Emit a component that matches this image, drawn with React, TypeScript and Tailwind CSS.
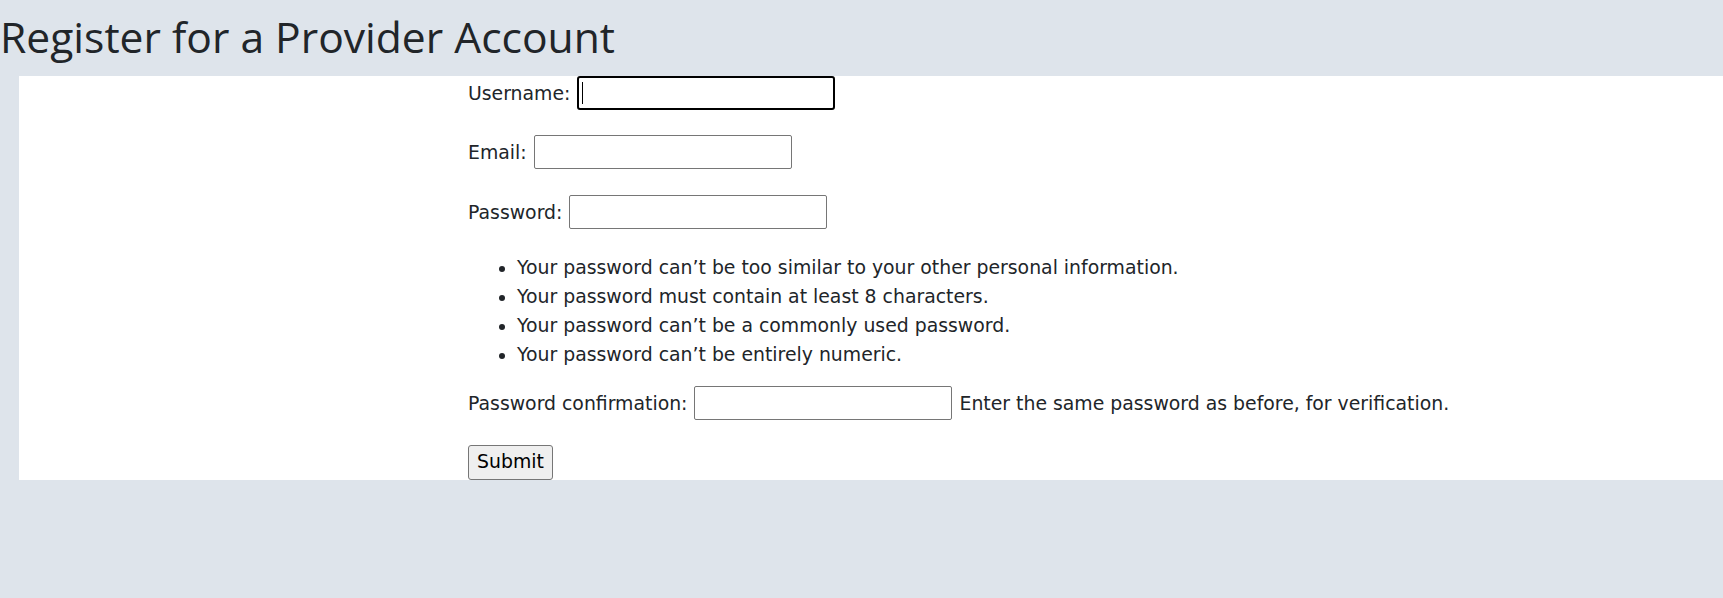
const bodyFont = "font-['DejaVu_Sans',sans-serif]";

const rules = [
  'Your password can’t be too similar to your other personal information.',
  'Your password must contain at least 8 characters.',
  'Your password can’t be a commonly used password.',
  'Your password can’t be entirely numeric.',
];

function TextInput({ focused = false }: { focused?: boolean }) {
  if (focused) {
    return (
      <div className="relative h-[34px] w-[258px] rounded-[3px] border-2 border-black bg-white">
        {/* blinking caret */}
        <span className="absolute left-[3px] top-[4px] h-[22px] w-px bg-black" />
      </div>
    );
  }
  return (
    <input
      type="text"
      readOnly
      className="h-[34px] w-[258px] rounded-[2px] border border-[#767676] bg-white outline-none"
    />
  );
}

function Row({ label, focused, className = '' }: { label: string; focused?: boolean; className?: string }) {
  return (
    <div className={`flex h-[34px] items-center gap-[7px] ${className}`}>
      <label className="pt-[2px]">{label}</label>
      <TextInput focused={focused} />
    </div>
  );
}

export default function App() {
  return (
    <div className="min-h-[598px] bg-[#dee4eb] text-[#212529]">
      <div className="h-[76px] pt-[11px]">
        <h1 className="font-['Open_Sans',sans-serif] text-[42.6px] leading-[50px] font-normal">
          Register for a Provider Account
        </h1>
      </div>

      <div className={`ml-[19px] h-[404px] bg-white pl-[449px] text-[18.85px] ${bodyFont}`}>
        <form>
          <Row label="Username:" focused />
          <Row label="Email:" className="mt-[25px]" />
          <Row label="Password:" className="mt-[26px]" />

          <ul className="mt-[24px] list-disc pl-[49px] leading-[29px]">
            {rules.map((r) => (
              <li key={r}>{r}</li>
            ))}
          </ul>

          <div className="mt-[17px] flex h-[34px] items-center">
            <label className="mr-[7px] pt-[2px]">Password confirmation:</label>
            <TextInput />
            <span className="ml-[7px] pt-[2px]">Enter the same password as before, for verification.</span>
          </div>

          <button
            type="button"
            className="mt-[25px] h-[35px] w-[85px] rounded-[3px] border border-[#767676] bg-[#efefef] text-black"
          >
            Submit
          </button>
        </form>
      </div>
    </div>
  );
}
